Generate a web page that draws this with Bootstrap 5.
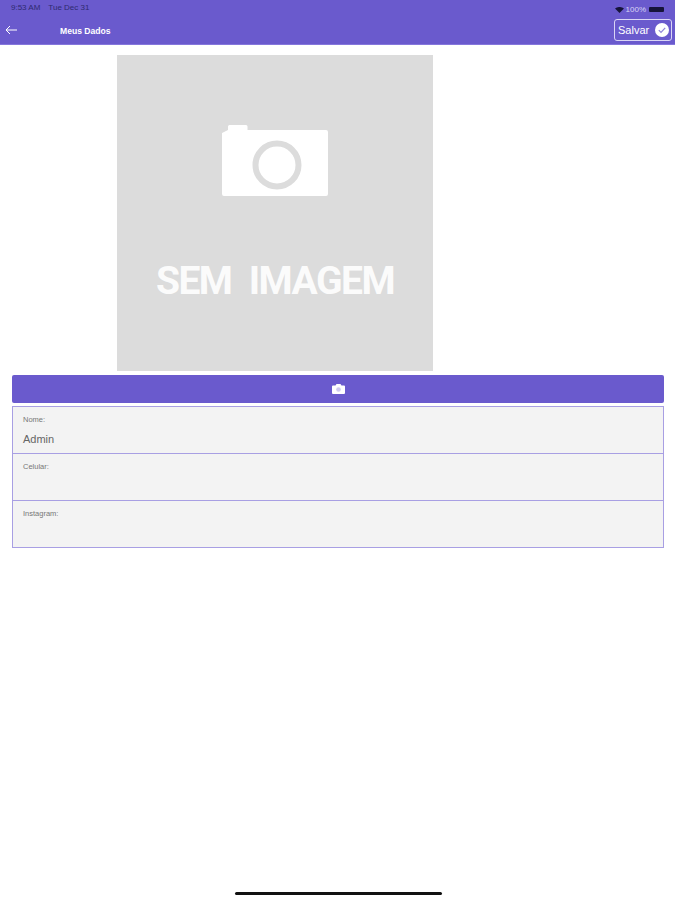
<!DOCTYPE html>
<html lang="pt">
<head>
<meta charset="utf-8">
<title>Meus Dados</title>
<link href="https://cdn.jsdelivr.net/npm/bootstrap@5.3.0/dist/css/bootstrap.min.css" rel="stylesheet">
<style>
html, body { height: 100%; }
body { font-family: "Liberation Sans", Arial, sans-serif; background: #fff; }
.screen { height: 900px; overflow: hidden; position: relative; }
.app-head { height: 45px; background: #6a5acd; border-bottom: 1px solid #8577dc; }
.status-line { height: 16px; padding: 3px 11px 0 11px; font-size: 8px; line-height: 10px; color: #2f2a70; }
.status-line .when { gap: 8px; }
.status-right { color: #d8d4f4; gap: 2px; font-size: 8px; }
.batt { width: 15px; height: 5px; background: #16143a; border-radius: 1px; display: block; margin-left: 1px; }
.nav-line { height: 28px; padding: 0 3px 0 5px; }
.back-ico { width: 12px; height: 10px; display: block; }
.screen-title { margin-left: 43px; margin-top: 2px; font-size: 8.6px; font-weight: 700; color: #fff; }
.save-box { width: 58px; height: 22px; border: 1px solid #d9d5f5; border-radius: 3px; color: #fff; font-size: 11px; padding: 0 2px 0 3px; }
.check-ico { width: 14px; height: 14px; display: block; }
.photo-wrap { padding: 10px 0 4px 117px; }
.no-photo { width: 316px; height: 316px; background: #dcdcdc; padding-top: 70px; }
.cam-big { width: 106px; height: 71px; display: block; margin-left: 105px; }
.no-photo-text { margin-top: 61px; font-family: "Roboto", "Liberation Sans", sans-serif; font-weight: 700; font-size: 39px; letter-spacing: -1.500px; line-height: 48px; color: #fbfbfb; text-align: center; white-space: nowrap; word-spacing: 9px; }
.form-wrap { padding: 0 11px 0 12px; }
.cam-btn { height: 28px; background: #6a5acd; border: 0; border-radius: 2px; margin-bottom: 3px; width: 100%; }
.cam-btn:hover { background: #6a5acd; }
.cam-small { width: 13px; height: 10px; display: block; }
.field-box { height: 47px; background: #f3f3f3; border: 1px solid #a89fe3; border-bottom: 0; padding: 8px 10px 0; }
.field-box.last-box { height: 48px; border-bottom: 1px solid #a89fe3; }
.field-label { font-size: 7.5px; line-height: 10px; color: #777; }
.field-value { font-size: 11px; line-height: 14px; color: #666; margin-top: 7px; }
.home-bar { position: absolute; left: 235px; top: 892px; width: 207px; height: 3px; border-radius: 2px; background: #111; }
</style>
</head>
<body>
<div class="screen">
  <header class="app-head">
    <div class="status-line d-flex justify-content-between">
      <div class="when d-flex"><span>9:53 AM</span><span>Tue Dec 31</span></div>
      <div class="status-right d-flex align-items-center">
        <svg width="9" height="6" viewBox="0 0 9 6"><path d="M0 1.400C2.600-.5 6.400-.5 9 1.400L4.500 6z" fill="#16143a"/></svg>
        <span>100%</span><span class="batt"></span>
      </div>
    </div>
    <div class="nav-line d-flex align-items-center">
      <svg class="back-ico" viewBox="0 0 12 10"><path d="M12 5H1M5 1 1 5l4 4" fill="none" stroke="#fff" stroke-width="1"/></svg>
      <span class="screen-title">Meus Dados</span>
      <div class="save-box ms-auto d-flex align-items-center justify-content-between">
        <span>Salvar</span>
        <svg class="check-ico" viewBox="0 0 14 14"><circle cx="7" cy="7" r="7" fill="#fff"/><path d="M3.800 7.200 6 9.400l4.200-4.600" fill="none" stroke="#8f83da" stroke-width="1.200"/></svg>
      </div>
    </div>
  </header>
  <div class="photo-wrap">
    <div class="no-photo">
      <svg class="cam-big" viewBox="0 0 106 71"><path d="M0 8 6 5V1.500A1.500 1.500 0 0 1 7.500 0H24a1.500 1.500 0 0 1 1.500 1.500V5H104a2 2 0 0 1 2 2V69a2 2 0 0 1-2 2H2a2 2 0 0 1-2-2z" fill="#fff"/><circle cx="55" cy="40" r="21.500" fill="#fff" stroke="#dcdcdc" stroke-width="6"/></svg>
      <div class="no-photo-text">SEM IMAGEM</div>
    </div>
  </div>
  <div class="form-wrap">
    <button type="button" class="btn cam-btn d-flex align-items-center justify-content-center p-0" aria-label="Câmera">
      <svg class="cam-small" viewBox="0 0 13 10"><path d="M0 2.500a1 1 0 0 1 1-1h2.500L4.500 0h4l1 1.500H12a1 1 0 0 1 1 1V9a1 1 0 0 1-1 1H1a1 1 0 0 1-1-1z" fill="#fff"/><circle cx="6.500" cy="5.500" r="2.300" fill="#cfcaf0"/></svg>
    </button>
    <div class="field-box"><div class="field-label">Nome:</div><div class="field-value">Admin</div></div>
    <div class="field-box"><div class="field-label">Celular:</div></div>
    <div class="field-box last-box"><div class="field-label">Instagram:</div></div>
  </div>
  <div class="home-bar"></div>
</div>
<script src="https://cdn.jsdelivr.net/npm/bootstrap@5.3.0/dist/js/bootstrap.bundle.min.js"></script>
</body>
</html>
